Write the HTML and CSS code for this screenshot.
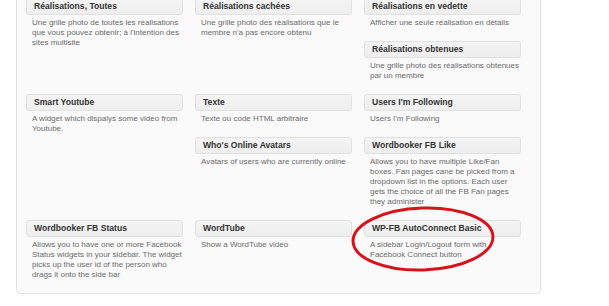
FILE: index.html
```html
<!DOCTYPE html>
<html lang="fr">
<head>
    <meta charset="UTF-8">
    <title>Widgets disponibles</title>
    <link rel="stylesheet" href="styles.css">
</head>
<body>
    <div class="page">
        <div class="widget-panel">
            <div class="widget-col">
                <div class="widget">
                    <div class="widget-title">Réalisations, Toutes</div>
                    <div class="widget-desc">Une grille photo de toutes les réalisations<br>que vous pouvez obtenir; à l'intention des<br>sites multisite</div>
                </div>
            </div>
            <div class="widget-col">
                <div class="widget">
                    <div class="widget-title">Réalisations cachées</div>
                    <div class="widget-desc">Une grille photo des réalisations que le<br>membre n'a pas encore obtenu</div>
                </div>
            </div>
            <div class="widget-col">
                <div class="widget">
                    <div class="widget-title">Réalisations en vedette</div>
                    <div class="widget-desc">Afficher une seule réalisation en détails</div>
                </div>
                <div class="widget">
                    <div class="widget-title">Réalisations obtenues</div>
                    <div class="widget-desc">Une grille photo des réalisations obtenues<br>par un membre</div>
                </div>
            </div>

            <div class="widget-col">
                <div class="widget">
                    <div class="widget-title">Smart Youtube</div>
                    <div class="widget-desc">A widget which dispalys some video from<br>Youtube.</div>
                </div>
            </div>
            <div class="widget-col">
                <div class="widget">
                    <div class="widget-title">Texte</div>
                    <div class="widget-desc">Texte ou code HTML arbitraire</div>
                </div>
                <div class="widget">
                    <div class="widget-title">Who's Online Avatars</div>
                    <div class="widget-desc">Avatars of users who are currently online</div>
                </div>
            </div>
            <div class="widget-col">
                <div class="widget">
                    <div class="widget-title">Users I'm Following</div>
                    <div class="widget-desc">Users I'm Following</div>
                </div>
                <div class="widget">
                    <div class="widget-title">Wordbooker FB Like</div>
                    <div class="widget-desc">Allows you to have multiple Like/Fan<br>boxes. Fan pages cane be picked from a<br>dropdown list in the options. Each user<br>gets the choice of all the FB Fan pages<br>they administer</div>
                </div>
            </div>

            <div class="widget-col">
                <div class="widget">
                    <div class="widget-title">Wordbooker FB Status</div>
                    <div class="widget-desc">Allows you to have one or more Facebook<br>Status widgets in your sidebar. The widget<br>picks up the user id of the person who<br>drags it onto the side bar</div>
                </div>
            </div>
            <div class="widget-col">
                <div class="widget">
                    <div class="widget-title">WordTube</div>
                    <div class="widget-desc">Show a WordTube video</div>
                </div>
            </div>
            <div class="widget-col">
                <div class="widget">
                    <div class="widget-title">WP-FB AutoConnect Basic</div>
                    <div class="widget-desc">A sidebar Login/Logout form with<br>Facebook Connect button</div>
                </div>
            </div>
        </div>

        <!-- red circle drawn over the screenshot -->
        <svg class="mark" width="160" height="80" viewBox="0 0 160 80">
            <ellipse cx="80" cy="40" rx="70" ry="31" transform="rotate(-2 80 40)" fill="none" stroke="#d8121b" stroke-width="3"/>
        </svg>
    </div>
</body>
</html>
```

FILE: styles.css
```css
body {
    margin: 0;
    background: #fff;
    font-family: "Liberation Sans", Arial, sans-serif;
}
.page {
    position: relative;
    height: 306px;
    overflow: hidden;
}
.widget-panel {
    box-sizing: border-box;
    width: 525px;
    margin: -20px 0 0 16px;
    padding: 17px 19px 0 9px;
    background: #fafafa;
    border: 1px solid #e3e3e3;
    border-radius: 0 0 4px 4px;
    display: grid;
    grid-template-columns: repeat(3, 157px);
    column-gap: 12px;
}
.widget {
    margin-bottom: 13px;
}
.widget-title {
    box-sizing: border-box;
    height: 17px;
    line-height: 15px;
    padding-left: 7px;
    background: linear-gradient(#f4f4f4, #eeeeee);
    border: 1px solid #e0e0e0;
    border-radius: 3px;
    color: #333;
    font-size: 8.6px;
    font-weight: bold;
}
.widget-desc {
    margin-top: 3px;
    padding-left: 6px;
    line-height: 10px;
    font-size: 8px;
    color: #6a6a6a;
    white-space: nowrap;
}
.mark {
    position: absolute;
    left: 343px;
    top: 199px;
}
```
